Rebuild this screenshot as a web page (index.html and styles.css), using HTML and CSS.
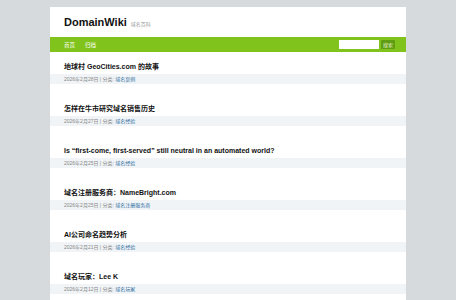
FILE: index.html
```html
<!DOCTYPE html>
<html lang="zh-CN">
<head>
  <meta charset="UTF-8">
  <title>DomainWiki 域名百科</title>
  <link rel="stylesheet" href="styles.css">
</head>
<body>

  <div class="wrap">
    <div class="header">
      <span class="logo">DomainWiki</span>
      <span class="desc">域名百科</span>
    </div>

    <div class="nav">
      <a href="#">首页</a>
      <a href="#">归档</a>
      <form class="search">
        <input type="text">
        <button type="button">搜索</button>
      </form>
    </div>

    <div class="posts">
      <div class="post">
        <h2>地球村 GeoCities.com 的故事</h2>
        <div class="meta">2026年2月28日 | 分类: <a href="#">域名案例</a></div>
      </div>
      <div class="post">
        <h2>怎样在牛市研究域名销售历史</h2>
        <div class="meta">2026年2月27日 | 分类: <a href="#">域名经验</a></div>
      </div>
      <div class="post">
        <h2>Is “first-come, first-served” still neutral in an automated world?</h2>
        <div class="meta">2026年2月25日 | 分类: <a href="#">域名经验</a></div>
      </div>
      <div class="post">
        <h2>域名注册服务商：NameBright.com</h2>
        <div class="meta">2026年2月25日 | 分类: <a href="#">域名注册服务商</a></div>
      </div>
      <div class="post">
        <h2>AI公司命名趋势分析</h2>
        <div class="meta">2026年2月21日 | 分类: <a href="#">域名经验</a></div>
      </div>
      <div class="post">
        <h2>域名玩家：Lee K</h2>
        <div class="meta">2026年2月12日 | 分类: <a href="#">域名玩家</a></div>
      </div>
    </div>
  </div>

</body>
</html>
```

FILE: styles.css
```css
body {
  margin: 0;
  padding-top: 7px;
  background: #d6dadd;
  font-family: 'Liberation Sans', 'Noto Sans CJK SC', sans-serif;
  color: #222;
}

a {
  text-decoration: none;
}

.wrap {
  width: 356px;
  margin: 0 auto;
  background: #fff;
}

.header {
  height: 30px;
  padding: 0 14px;
  display: flex;
  align-items: center;
  gap: 4px;
}

.logo {
  font-size: 11px;
  font-weight: bold;
  color: #111;
}

.desc {
  font-size: 5px;
  color: #999;
  padding-top: 2px;
}

.nav {
  height: 15px;
  background: #7fc31c;
  display: flex;
  align-items: center;
  padding: 0 11px 0 14px;
  gap: 10px;
}

.nav a {
  color: #fff;
  font-size: 5.5px;
}

.search {
  margin: 0 0 0 auto;
  display: flex;
  gap: 2px;
}

.search input {
  width: 40px;
  height: 9px;
  padding: 0;
  border: none;
  background: #fff;
  box-sizing: border-box;
}

.search button {
  height: 9px;
  width: 14px;
  padding: 0;
  border: none;
  border-radius: 1px;
  background: #5f9e12;
  color: #e6f2d4;
  font-size: 5px;
  font-family: inherit;
}

.post {
  padding: 10px 0 10px;
}

.post h2 {
  margin: 0 0 2px;
  padding: 0 14px;
  font-size: 7px;
  line-height: 10px;
  color: #111;
}

.meta {
  height: 10px;
  line-height: 10px;
  padding: 0 14px;
  background: #f1f4f6;
  font-size: 5px;
  color: #888;
}

.meta a {
  color: #2e6da4;
}
```
